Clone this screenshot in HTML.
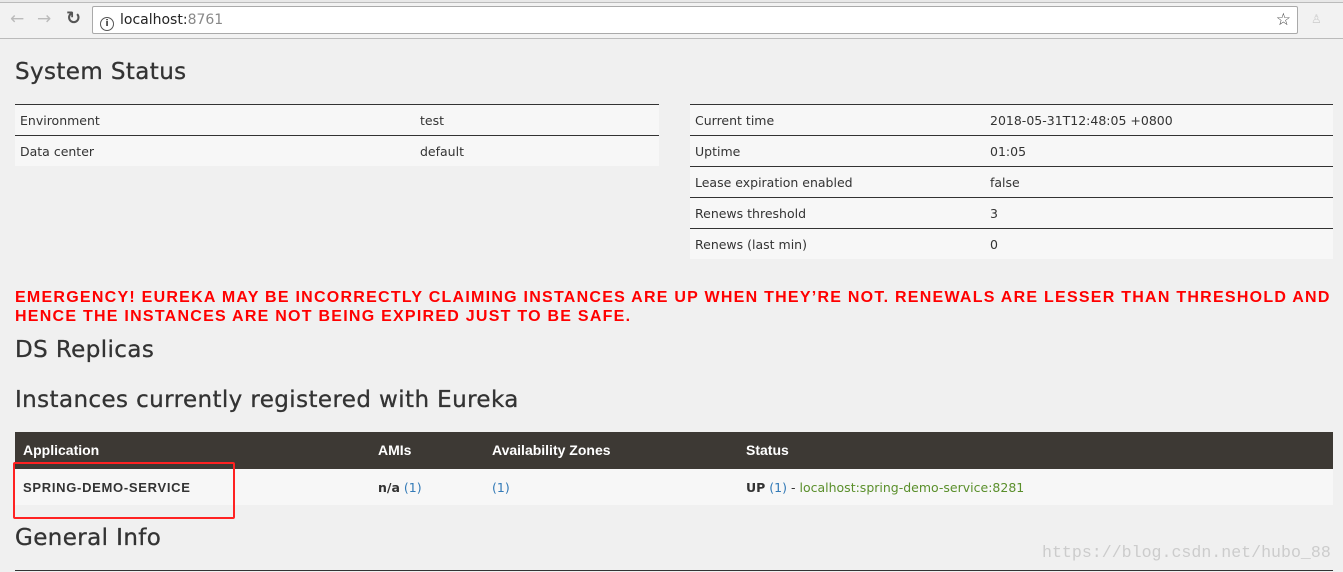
<!DOCTYPE html>
<html><head><style>
body{margin:0;width:1343px;height:572px;overflow:hidden;background:#f0f0f0;font-family:"DejaVu Sans",sans-serif;color:#333;position:relative}
.bar{position:absolute;left:0;top:0;width:1343px;height:38px;background:#f2f2f2;border-bottom:1px solid #bbb}
.tabs{position:absolute;top:0;left:0;right:0;height:2px;border-bottom:1px solid #bbb;background:#e8e8e8}
.url{position:absolute;left:92px;top:6px;width:1204px;height:26px;background:#fff;border:1px solid #aaa;border-radius:2px;font-size:14px;line-height:26px;font-family:"DejaVu Sans",sans-serif}
.a{position:absolute;font-size:13px}
h2{position:absolute;margin:0;font-weight:normal;font-size:23px;letter-spacing:0.4px;color:#333;left:15px;-webkit-text-stroke:0.3px #333}
table{position:absolute;border-collapse:collapse;font-size:12.5px}
td{height:30px;border-top:1px solid #333;background:#f7f7f7;padding:0 5px}
.red{position:absolute;left:15px;top:288px;color:#f00;font-weight:bold;font-size:16px;line-height:19px;width:1328px;font-family:"Liberation Sans",sans-serif;letter-spacing:1.25px}
.g{color:#5a8f2b}.b{color:#337ab7}
.hd{font-family:"Liberation Sans",sans-serif}
</style></head><body>
<div class="bar"><div class="tabs"></div>
<span class="a" style="left:10px;top:9px;color:#bbb;font-size:17px">←</span>
<span class="a" style="left:37px;top:9px;color:#bbb;font-size:17px">→</span>
<span class="a" style="left:66px;top:8px;color:#555;font-size:18px;font-weight:bold">↻</span>
<div class="url"><span style="display:inline-block;width:12px;height:12px;border:1.5px solid #555;border-radius:50%;margin:0 6px 0 7px;vertical-align:-2px;font-size:9px;line-height:12px;text-align:center;font-weight:bold">i</span><span style="color:#222">localhost:</span><span style="color:#888">8761</span><span style="position:absolute;right:6px;top:0;font-size:17px;color:#444">☆</span></div>
<span class="a" style="left:1311px;top:12px;color:#ccc;font-size:12px">♙</span>
</div>
<h2 style="top:59px">System Status</h2>
<table style="left:15px;top:104px;width:644px">
<tr><td style="width:390px">Environment</td><td>test</td></tr>
<tr><td>Data center</td><td>default</td></tr></table>
<table style="left:690px;top:104px;width:643px">
<tr><td style="width:285px">Current time</td><td>2018-05-31T12:48:05 +0800</td></tr>
<tr><td>Uptime</td><td>01:05</td></tr>
<tr><td>Lease expiration enabled</td><td>false</td></tr>
<tr><td>Renews threshold</td><td>3</td></tr>
<tr><td>Renews (last min)</td><td>0</td></tr></table>
<div class="red">EMERGENCY! EUREKA MAY BE INCORRECTLY CLAIMING INSTANCES ARE UP WHEN THEY’RE NOT. RENEWALS ARE LESSER THAN THRESHOLD AND HENCE THE INSTANCES ARE NOT BEING EXPIRED JUST TO BE SAFE.</div>
<h2 style="top:337px">DS Replicas</h2>
<h2 style="top:387px">Instances currently registered with Eureka</h2>
<div class="hd" style="position:absolute;left:15px;top:432px;width:1318px;height:37px;background:#3d3934;color:#fff;font-weight:bold;font-size:14px">
<span class="a" style="left:8px;top:10px;font-size:14px">Application</span>
<span class="a" style="left:363px;top:10px;font-size:14px">AMIs</span>
<span class="a" style="left:477px;top:10px;font-size:14px">Availability Zones</span>
<span class="a" style="left:731px;top:10px;font-size:14px">Status</span></div>
<div style="position:absolute;left:15px;top:469px;width:1318px;height:36px;background:#f7f7f7;font-size:12.5px">
<span class="a hd" style="left:8px;top:11px;font-weight:bold;letter-spacing:0.7px">SPRING-DEMO-SERVICE</span>
<span class="a" style="left:363px;top:11px;font-size:12.5px"><b>n/a</b> <span class="b">(1)</span></span>
<span class="a" style="left:477px;top:11px;font-size:12.5px"><span class="b">(1)</span></span>
<span class="a" style="left:731px;top:11px;font-size:12.5px"><b>UP</b> <span class="b">(1)</span> - <span class="g">localhost:spring-demo-service:8281</span></span></div>
<div style="position:absolute;left:13px;top:462px;width:218px;height:53px;border:2px solid #f22;border-radius:2px"></div>
<h2 style="top:525px">General Info</h2>
<div style="position:absolute;left:15px;top:570px;width:1318px;height:1px;background:#333"></div>
<span class="a" style="left:1042px;top:543px;color:#ccc;font-size:16.6px;font-family:'Liberation Mono',monospace">https://blog.csdn.net/hubo_88</span>
</body></html>
